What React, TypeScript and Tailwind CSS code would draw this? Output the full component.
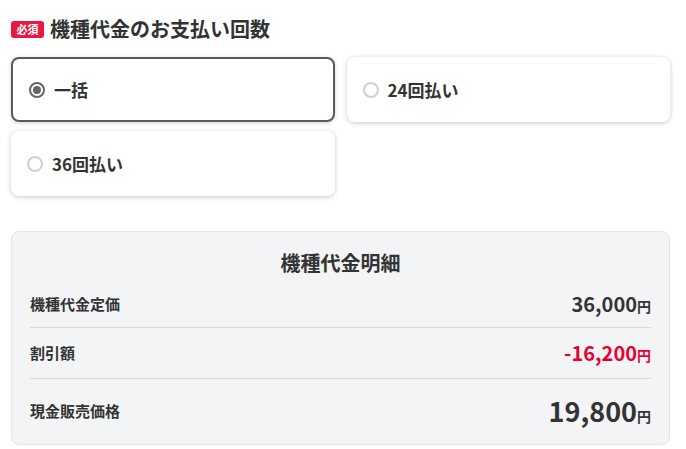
import React from "react";

const font = { fontFamily: '"Noto Sans CJK JP", "Noto Sans", sans-serif' };

function Radio({ checked }: { checked: boolean }) {
  return checked ? (
    <span className="flex h-[16px] w-[16px] items-center justify-center rounded-full border-2 border-[#666]">
      <span className="h-[8px] w-[8px] rounded-full bg-[#666]" />
    </span>
  ) : (
    <span className="h-[16px] w-[16px] rounded-full border-2 border-[#d0d0d0]" />
  );
}

function Option({ label, checked }: { label: string; checked?: boolean }) {
  return (
    <div
      className={
        "flex h-[65px] items-center gap-[9px] rounded-[8px] bg-white pl-[16px] " +
        (checked
          ? "border-2 border-[#5a5a5a] pl-[14px] shadow-[0_1px_4px_rgba(0,0,0,0.18)]"
          : "shadow-[0_1px_5px_rgba(0,0,0,0.22)]")
      }
    >
      <Radio checked={!!checked} />
      <span className="text-[17px] font-bold leading-none text-[#333]">{label}</span>
    </div>
  );
}

export default function App() {
  return (
    <div className="min-h-[449px] bg-white pl-[11px] pr-[16px] text-[#333]" style={font}>
      <div className="flex items-center gap-[6px] pt-[17px]">
        <span className="flex h-[17px] w-[33px] items-center justify-center rounded-[3px] bg-[#ea1740] text-[11px] font-bold leading-none text-white">
          必須
        </span>
        <span className="text-[20px] font-bold leading-[24px] text-[#333]">機種代金のお支払い回数</span>
      </div>

      <div className="mt-[16px] grid grid-cols-2 gap-x-[12px] gap-y-[9px]">
        <Option label="一括" checked />
        <Option label="24回払い" />
        <Option label="36回払い" />
      </div>

      <div className="mt-[35px] rounded-[8px] border border-[#e3e4e6] bg-[#f3f4f6] px-[18px] pt-[19px]">
        <div className="text-center text-[20px] font-bold leading-[24px] text-[#333]">機種代金明細</div>
        <div className="mt-[6px] flex items-center justify-between border-b border-[#d9dadc] py-[9px]">
          <span className="text-[15px] font-bold text-[#333]">機種代金定価</span>
          <span className="flex items-baseline font-bold text-[#333]">
            <span className="text-[20px] leading-[28px]">36,000</span>
            <span className="text-[14px]">円</span>
          </span>
        </div>
        <div className="flex items-center justify-between border-b border-[#d9dadc] py-[11px]">
          <span className="text-[15px] font-bold text-[#333]">割引額</span>
          <span className="flex items-baseline font-bold text-[#e8002f]">
            <span className="text-[20px] leading-[28px]">-16,200</span>
            <span className="text-[14px]">円</span>
          </span>
        </div>
        <div className="flex items-center justify-between pt-[14px] pb-[15px]">
          <span className="text-[15px] font-bold text-[#333]">現金販売価格</span>
          <span className="flex items-baseline font-bold text-[#333]">
            <span className="text-[27px] leading-[36px]">19,800</span>
            <span className="text-[14px]">円</span>
          </span>
        </div>
      </div>
    </div>
  );
}
